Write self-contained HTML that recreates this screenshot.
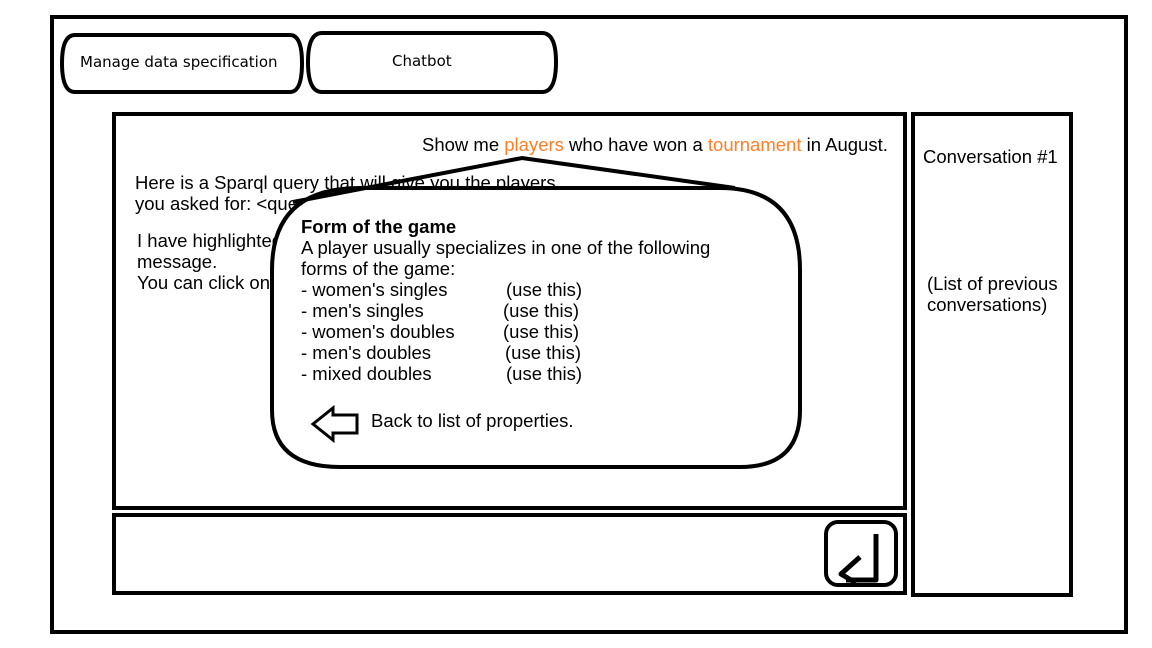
<!DOCTYPE html>
<html><head><style>
body{margin:0;width:1152px;height:648px;background:#fff;position:relative;overflow:hidden;font-family:"Liberation Sans",sans-serif;color:#000}
.t{position:absolute;font-size:18.5px;line-height:21px;white-space:pre}
.o{color:#ff7f27}
svg{position:absolute;left:0;top:0}
</style></head><body>
<svg width="1152" height="648">
<g fill="none" stroke="#000" stroke-width="4">
<rect x="52" y="17" width="1074" height="615"/>
<path d="M75 35 H290 Q302 35 302 63 Q302 92 290 92 H75 Q62 92 62 63 Q62 35 75 35 Z"/>
<path d="M322 33 H542 Q556 33 556 62 Q556 92 542 92 H322 Q308 92 308 62 Q308 33 322 33 Z"/>
<rect x="114" y="114" width="791" height="394"/>
<rect x="114" y="515" width="791" height="78"/>
<rect x="913" y="114" width="158" height="481"/>
<rect x="826" y="522" width="70" height="63" rx="12"/>
</g>
<path d="M876 534 V580 H846 M860 557 L841 574 L856 583" fill="none" stroke="#000" stroke-width="5" stroke-linejoin="round"/>
</svg>
<div class="t" style="left:80px;top:52px;font-family:'DejaVu Sans',sans-serif;font-size:15px">Manage data specification</div>
<div class="t" style="left:392px;top:51px;font-family:'DejaVu Sans',sans-serif;font-size:15px">Chatbot</div>
<div class="t" style="left:422px;top:134px">Show me <span class="o">players</span> who have won a <span class="o">tournament</span> in August.</div>
<div class="t" style="left:135px;top:172px">Here is a Sparql query that will give you the players
you asked for: &lt;query&gt;</div>
<div class="t" style="left:137px;top:230px">I have highlighted
message.
You can click on</div>
<div class="t" style="left:923px;top:146px">Conversation #1</div>
<div class="t" style="left:927px;top:273px">(List of previous
conversations)</div>
<svg width="1152" height="648">
<path d="M360 188 H720 Q800 188 800 270 V410 Q800 467 740 467 H340 Q272 467 272 410 V270 Q272 188 360 188 Z" fill="#fff" stroke="#000" stroke-width="4"/>
<path d="M293 202 L522 158 L735 188" fill="none" stroke="#000" stroke-width="4"/>
<path d="M313 424 L333 408 V415 H357 V433 H333 V440 Z" fill="#fff" stroke="#000" stroke-width="3"/>
</svg>
<div class="t" style="left:301px;top:216px;font-weight:bold">Form of the game</div>
<div class="t" style="left:301px;top:237px">A player usually specializes in one of the following
forms of the game:
- women's singles
- men's singles
- women's doubles
- men's doubles
- mixed doubles</div>
<div class="t" style="left:506px;top:279px">(use this)</div>
<div class="t" style="left:503px;top:300px">(use this)</div>
<div class="t" style="left:503px;top:321px">(use this)</div>
<div class="t" style="left:505px;top:342px">(use this)</div>
<div class="t" style="left:506px;top:363px">(use this)</div>
<div class="t" style="left:371px;top:410px">Back to list of properties.</div>
</body></html>
